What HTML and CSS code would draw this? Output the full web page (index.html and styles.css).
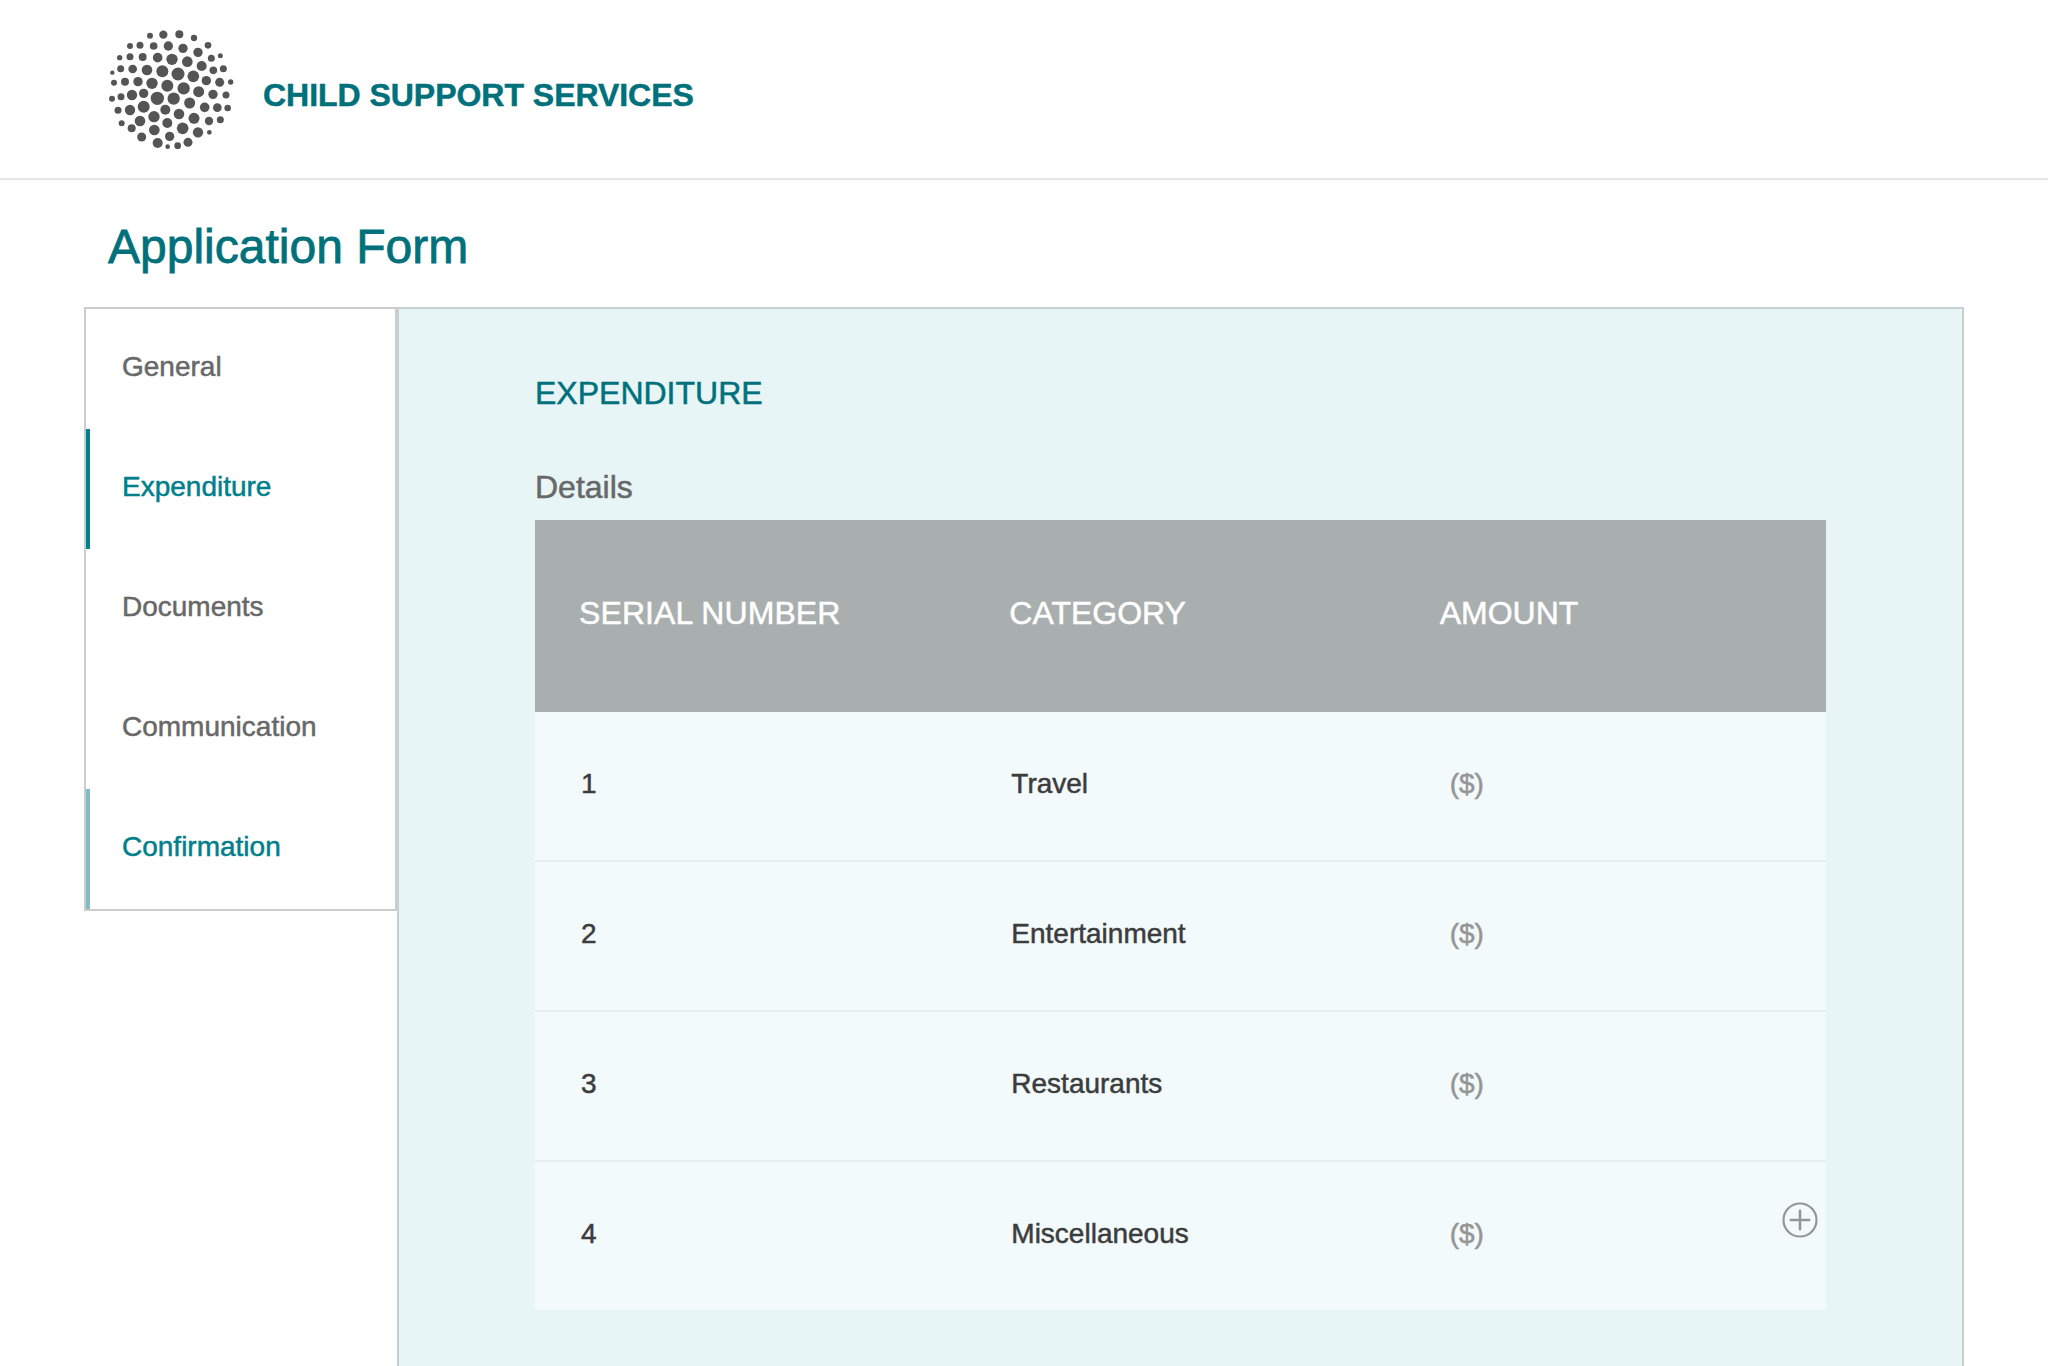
FILE: index.html
```html
<!DOCTYPE html>
<html lang="en">
<head>
<meta charset="utf-8">
<title>Child Support Services – Application Form</title>
<link rel="stylesheet" href="styles.css">
</head>
<body>
<header class="site-header">
  <svg class="logo" viewBox="0 0 420 420" fill="#555" aria-hidden="true">
    <circle cx="150" cy="47" r="9"/><circle cx="190" cy="44" r="12.5"/><circle cx="238" cy="43" r="12"/><circle cx="282" cy="54" r="9.5"/>
    <circle cx="90" cy="78" r="9"/><circle cx="120" cy="76" r="10.5"/><circle cx="161" cy="78" r="11.5"/><circle cx="205" cy="78" r="14"/><circle cx="249" cy="85" r="14"/><circle cx="294" cy="97" r="14"/><circle cx="324" cy="76" r="10"/>
    <circle cx="59" cy="113" r="8"/><circle cx="90" cy="110" r="10.5"/><circle cx="128" cy="111" r="12"/><circle cx="173" cy="113" r="14.5"/><circle cx="216" cy="118" r="17"/><circle cx="262" cy="125" r="16"/><circle cx="305" cy="138" r="15"/><circle cx="334" cy="115" r="10.5"/><circle cx="361" cy="107" r="7.5"/>
    <circle cx="37" cy="158" r="6.5"/><circle cx="62" cy="146" r="10.5"/><circle cx="98" cy="147" r="13"/><circle cx="141" cy="150" r="16"/><circle cx="187" cy="154" r="18"/><circle cx="234" cy="162" r="19.5"/><circle cx="280" cy="169" r="17.5"/><circle cx="340" cy="151" r="11.5"/><circle cx="370" cy="146" r="10.5"/>
    <circle cx="42" cy="188" r="9"/><circle cx="75" cy="185" r="12"/><circle cx="114" cy="185" r="14"/><circle cx="156" cy="190" r="17"/><circle cx="202" cy="197" r="18"/><circle cx="251" cy="205" r="18.5"/><circle cx="296" cy="215" r="16.5"/><circle cx="319" cy="182" r="14"/><circle cx="359" cy="187" r="13.5"/><circle cx="392" cy="186" r="8"/>
    <circle cx="36" cy="236" r="9"/><circle cx="63" cy="230" r="10.5"/><circle cx="96" cy="225" r="15.5"/><circle cx="131" cy="220" r="14"/><circle cx="172" cy="235" r="20"/><circle cx="221" cy="236" r="18.5"/><circle cx="269" cy="249" r="16.5"/><circle cx="339" cy="223" r="14"/><circle cx="378" cy="225" r="10.5"/>
    <circle cx="54" cy="271" r="10.5"/><circle cx="90" cy="270" r="15.5"/><circle cx="131" cy="260" r="18"/><circle cx="196" cy="269" r="15"/><circle cx="314" cy="262" r="14.5"/><circle cx="352" cy="263" r="13"/><circle cx="383" cy="264" r="10"/>
    <circle cx="65" cy="310" r="9"/><circle cx="120" cy="303" r="16"/><circle cx="162" cy="290" r="17"/><circle cx="237" cy="282" r="16"/><circle cx="282" cy="295" r="16.5"/><circle cx="327" cy="303" r="12.5"/><circle cx="361" cy="299" r="10.5"/>
    <circle cx="95" cy="325" r="12"/><circle cx="163" cy="330" r="16"/><circle cx="202" cy="309" r="15"/><circle cx="248" cy="325" r="17.5"/><circle cx="294" cy="337" r="15.5"/><circle cx="328" cy="337" r="7"/>
    <circle cx="125" cy="351" r="13.5"/><circle cx="173" cy="369" r="15"/><circle cx="209" cy="349" r="14"/><circle cx="203" cy="380" r="7"/><circle cx="233" cy="377" r="10"/><circle cx="264" cy="367" r="13.5"/>
  </svg>
  <div class="brand">CHILD SUPPORT SERVICES</div>
</header>
<h1 class="page-title">Application Form</h1>
<div class="layout">
  <nav class="steps">
    <a class="step">General</a>
    <a class="step step-active">Expenditure</a>
    <a class="step">Documents</a>
    <a class="step">Communication</a>
    <a class="step step-active step-soft">Confirmation</a>
  </nav>
  <main class="panel">
    <h2 class="panel-title">EXPENDITURE</h2>
    <div class="panel-label">Details</div>
    <div class="table">
      <div class="row row-head"><span class="serial">SERIAL NUMBER</span><span>CATEGORY</span><span>AMOUNT</span></div>
      <div class="row"><span>1</span><span>Travel</span><span class="amount">($)</span></div>
      <div class="row"><span>2</span><span>Entertainment</span><span class="amount">($)</span></div>
      <div class="row"><span>3</span><span>Restaurants</span><span class="amount">($)</span></div>
      <div class="row row-last"><span>4</span><span>Miscellaneous</span><span class="amount">($)</span>
        <svg class="add" viewBox="0 0 36 36" fill="none" stroke="#959595" stroke-width="2.2"><circle cx="18" cy="18" r="16.5"/><path d="M8.8 18h18.4M18 8.8v18.4" stroke-linecap="round" stroke-width="2.5"/></svg>
      </div>
    </div>
  </main>
</div>
</body>
</html>
```
FILE: styles.css
```css
* { box-sizing: border-box; }
body {
  margin: 0;
  height: 1366px;
  overflow: hidden;
  display: flex;
  flex-direction: column;
  background: #fff;
  color: #3c3c3c;
  font-family: "Liberation Sans", Arial, sans-serif;
  font-size: 28px;
  -webkit-text-stroke: 0.5px;
}
.site-header {
  flex: none;
  display: flex;
  gap: 23px;
  height: 180px;
  padding: 20px 100px 0;
  border-bottom: 2px solid #e5e5e5;
}
.logo { width: 140px; height: 140px; }
.brand {
  padding-top: 57px;
  font-size: 32px;
  line-height: 36px;
  font-weight: bold;
  letter-spacing: -0.03px;
  color: #00717b;
}
.page-title {
  flex: none;
  height: 127px;
  margin: 0;
  padding-left: 108px;
  font-size: 48px;
  line-height: 133px;
  font-weight: normal;
  color: #00717b;
  -webkit-text-stroke: 0.8px;
}
.layout {
  flex: 1;
  display: flex;
  padding: 0 84px;
}
.steps {
  align-self: flex-start;
  width: 313px;
  border: 2px solid #ccc;
}
.step {
  display: block;
  height: 120px;
  padding-left: 32px;
  border-left: 4px solid transparent;
  line-height: 115px;
  color: #686868;
}
.step-active { border-left-color: #00808a; color: #00808a; }
.step-soft { border-left-color: #80bec3; }
.panel {
  flex: 1;
  padding: 66px 136px 0;
  border: 2px solid #c5d1d1;
  border-bottom: 0;
  background: #e7f5f6;
}
.panel-title {
  margin: 0 0 58px;
  font-size: 32px;
  line-height: 36px;
  font-weight: normal;
  color: #00717b;
}
.panel-label {
  margin-bottom: 15px;
  font-size: 32px;
  line-height: 36px;
  color: #686868;
}
.row {
  position: relative;
  display: grid;
  grid-template-columns: repeat(3, 1fr);
  height: 150px;
  border-bottom: 2px solid #e6eef0;
  background: #f2fafc;
  line-height: 143px;
}
.row span { padding-left: 46px; }
.row .amount { padding-left: 54px; color: #959595; }
.row-head {
  height: 192px;
  border: 0;
  background: #a9aeae;
  color: #fff;
  font-size: 32px;
  line-height: 186px;
}
.row-head span { padding-left: 44px; }
.row-head .serial { letter-spacing: 0.1px; }
.row-last { height: 148px; border: 0; }
.add {
  position: absolute;
  right: 8px;
  top: 40px;
  width: 36px;
  height: 36px;
}
```
